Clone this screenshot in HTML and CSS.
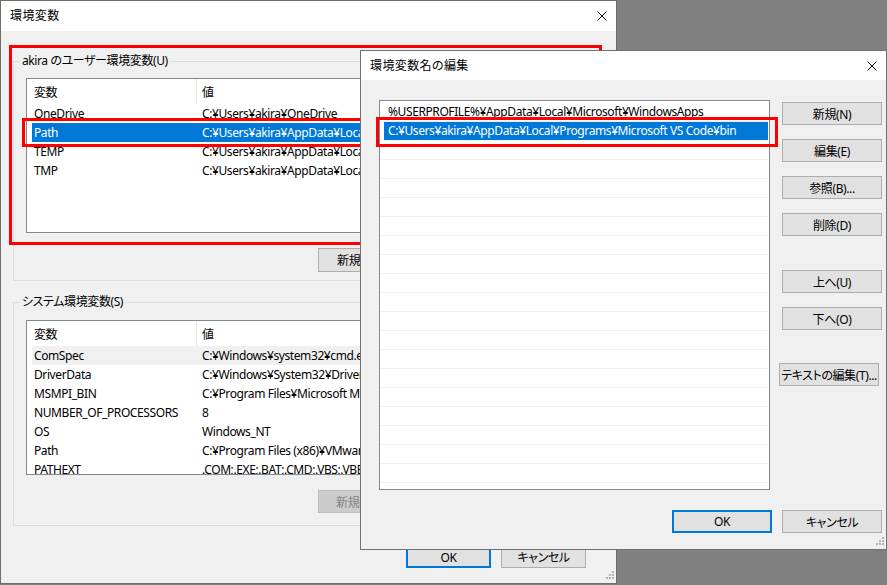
FILE: index.html
```html
<!DOCTYPE html>
<html lang="ja">
<head>
    <meta charset="UTF-8">
    <title>環境変数</title>
    <link rel="stylesheet" href="styles.css">
</head>
<body>
<div class="desktop">

    <!-- back dialog -->
    <div class="window back-window">
        <div class="titlebar">
            <span class="title">環境変数</span>
            <svg class="close" width="10" height="10" viewBox="0 0 10 10"><path d="M0.5 0.5L9.5 9.5M9.5 0.5L0.5 9.5" stroke="#000" stroke-width="1"/></svg>
        </div>
        <div class="window-body">
            <div class="group user-group">
                <div class="group-label">akira のユーザー環境変数(U)</div>
                <div class="listview">
                    <div class="lv-header"><div class="col name">変数</div><div class="col value">値</div></div>
                    <div class="lv-row"><div class="col name">OneDrive</div><div class="col value">C:¥Users¥akira¥OneDrive</div></div>
                    <div class="lv-row selected"><div class="col name">Path</div><div class="col value">C:¥Users¥akira¥AppData¥Local¥Programs¥Microsoft VS Code¥bin</div></div>
                    <div class="lv-row"><div class="col name">TEMP</div><div class="col value">C:¥Users¥akira¥AppData¥Local¥Temp</div></div>
                    <div class="lv-row"><div class="col name">TMP</div><div class="col value">C:¥Users¥akira¥AppData¥Local¥Temp</div></div>
                </div>
                <div class="group-buttons">
                    <button class="btn">新規(N)...</button>
                    <button class="btn">編集(E)...</button>
                    <button class="btn">削除(D)</button>
                </div>
            </div>

            <div class="group system-group">
                <div class="group-label">システム環境変数(S)</div>
                <div class="listview">
                    <div class="lv-header"><div class="col name">変数</div><div class="col value">値</div></div>
                    <div class="lv-row inactive"><div class="col name">ComSpec</div><div class="col value">C:¥Windows¥system32¥cmd.exe</div></div>
                    <div class="lv-row"><div class="col name">DriverData</div><div class="col value">C:¥Windows¥System32¥Drivers¥DriverData</div></div>
                    <div class="lv-row"><div class="col name">MSMPI_BIN</div><div class="col value">C:¥Program Files¥Microsoft MPI¥Bin¥</div></div>
                    <div class="lv-row"><div class="col name">NUMBER_OF_PROCESSORS</div><div class="col value">8</div></div>
                    <div class="lv-row"><div class="col name">OS</div><div class="col value">Windows_NT</div></div>
                    <div class="lv-row"><div class="col name">Path</div><div class="col value">C:¥Program Files (x86)¥VMware¥VMware Workstation¥bin¥</div></div>
                    <div class="lv-row"><div class="col name">PATHEXT</div><div class="col value">.COM;.EXE;.BAT;.CMD;.VBS;.VBE;.JS;.JSE;.WSF;.WSH;.MSC</div></div>
                </div>
                <div class="group-buttons">
                    <button class="btn" disabled>新規(W)...</button>
                    <button class="btn" disabled>編集(I)...</button>
                    <button class="btn" disabled>削除(L)</button>
                </div>
            </div>

            <div class="dialog-buttons">
                <button class="btn default">OK</button>
                <button class="btn">キャンセル</button>
            </div>
        </div>
        <svg class="grip" width="10" height="10" viewBox="0 0 10 10"><path d="M8 0h2v2H8zM5 3h2v2H5zM8 3h2v2H8zM2 6h2v2H2zM5 6h2v2H5zM8 6h2v2H8z" fill="#b4b4b4"/></svg>
    </div>

    <div class="mark mark-user"></div>
    <div class="mark mark-path"></div>

    <!-- front dialog -->
    <div class="window front-window">
        <div class="titlebar">
            <span class="title">環境変数名の編集</span>
            <svg class="close" width="10" height="10" viewBox="0 0 10 10"><path d="M0.5 0.5L9.5 9.5M9.5 0.5L0.5 9.5" stroke="#000" stroke-width="1"/></svg>
        </div>
        <div class="window-body">
            <div class="edit-area">
                <div class="entry-list">
                    <div class="entry"><span>%USERPROFILE%¥AppData¥Local¥Microsoft¥WindowsApps</span></div>
                    <div class="entry selected"><span>C:¥Users¥akira¥AppData¥Local¥Programs¥Microsoft VS Code¥bin</span></div>
                    <div class="entry"></div>
                    <div class="entry"></div>
                    <div class="entry"></div>
                    <div class="entry"></div>
                    <div class="entry"></div>
                    <div class="entry"></div>
                    <div class="entry"></div>
                    <div class="entry"></div>
                    <div class="entry"></div>
                    <div class="entry"></div>
                    <div class="entry"></div>
                    <div class="entry"></div>
                    <div class="entry"></div>
                    <div class="entry"></div>
                    <div class="entry"></div>
                    <div class="entry"></div>
                    <div class="entry"></div>
                    <div class="entry"></div>
                </div>
                <div class="side-buttons">
                    <button class="btn">新規(N)</button>
                    <button class="btn">編集(E)</button>
                    <button class="btn">参照(B)...</button>
                    <button class="btn">削除(D)</button>
                    <button class="btn move-up">上へ(U)</button>
                    <button class="btn">下へ(O)</button>
                    <button class="btn text-edit">テキストの編集(T)...</button>
                </div>
            </div>
            <div class="dialog-buttons">
                <button class="btn default">OK</button>
                <button class="btn">キャンセル</button>
            </div>
        </div>
        <svg class="grip" width="10" height="10" viewBox="0 0 10 10"><path d="M8 0h2v2H8zM5 3h2v2H5zM8 3h2v2H8zM2 6h2v2H2zM5 6h2v2H5zM8 6h2v2H8z" fill="#b4b4b4"/></svg>
    </div>

    <div class="mark mark-entry"></div>
</div>
</body>
</html>
```

FILE: styles.css
```css
:root {
    --dialog-bg: #f0f0f0;
    --select-blue: #0078d7;
    --button-bg: #e1e1e1;
    --button-border: #adadad;
    --mark-red: #ff0000;
}

body {
    margin: 0;
    font-family: "Noto Sans", "Noto Sans CJK JP", sans-serif;
    font-size: 12px;
    letter-spacing: -0.4px;
    font-feature-settings: "palt";
    color: #000;
}

.desktop {
    position: relative;
    width: 887px;
    height: 585px;
    background-color: #808080;
    overflow: hidden;
}

/* windows */
.window {
    position: absolute;
    box-sizing: border-box;
    display: flex;
    flex-direction: column;
    background-color: var(--dialog-bg);
    overflow: hidden;
}

.back-window {
    left: 0;
    top: 0;
    width: 617px;
    height: 584px;
    border: 1px solid #6e6e6e;
}

.front-window {
    left: 360px;
    top: 50px;
    width: 527px;
    height: 500px;
    border: 1px solid #707070;
}

.titlebar {
    display: flex;
    align-items: center;
    justify-content: space-between;
    background-color: #fff;
    padding: 0 9px;
    flex-shrink: 0;
}

.back-window .titlebar {
    height: 30px;
}

.front-window .titlebar {
    height: 29px;
    padding-left: 9px;
}

.title {
    line-height: 16px;
    letter-spacing: 0.4px;
}

.window-body {
    flex: 1;
    display: flex;
    flex-direction: column;
}

.back-window .window-body {
    padding: 0 13px 0 12px;
}

.front-window .window-body {
    padding: 20px 4px 0 18px;
}

/* buttons */
.btn {
    box-sizing: border-box;
    height: 23px;
    padding: 0;
    font-family: inherit;
    font-size: 12px;
    letter-spacing: inherit;
    font-feature-settings: inherit;
    color: #000;
    background-color: var(--button-bg);
    border: 1px solid var(--button-border);
    border-radius: 0;
    white-space: nowrap;
}

.btn:disabled {
    background-color: #cccccc;
    border-color: #bfbfbf;
    color: #838383;
}

.btn.default {
    border: 2px solid var(--select-blue);
}

/* group boxes */
.group {
    display: flex;
    flex-direction: column;
    border: 1px solid #dcdcdc;
    padding: 0 11px 8px 12px;
}

.user-group {
    margin-top: 30px;
}

.system-group {
    margin-top: 21px;
    padding-bottom: 12px;
}

.group-label {
    align-self: flex-start;
    margin: -9px 0 0 -6px;
    padding: 0 2px;
    height: 16px;
    line-height: 16px;
    background-color: var(--dialog-bg);
}

.group-buttons {
    display: flex;
    justify-content: flex-end;
    gap: 9px;
    margin-top: 15px;
}

.group-buttons .btn {
    width: 85px;
    height: 24px;
}

.system-group .group-buttons .btn {
    height: 23px;
}

/* list views */
.listview {
    box-sizing: border-box;
    height: 155px;
    margin-top: 9px;
    background-color: #fff;
    border: 1px solid #828790;
    overflow: hidden;
}

.system-group .listview {
    margin-top: 10px;
}

.lv-header,
.lv-row {
    display: flex;
    margin-left: 5px;
    white-space: nowrap;
}

.lv-header {
    height: 25px;
    align-items: center;
}

.lv-row {
    height: 19px;
    align-items: center;
}

.col.name {
    box-sizing: border-box;
    width: 165px;
    padding-left: 2px;
    border-right: 1px solid transparent;
    align-self: stretch;
    display: flex;
    align-items: center;
}

.lv-header .col.name {
    border-right-color: #e5e5e5;
}

.col.value {
    padding-left: 5px;
}

.lv-row.selected {
    background-color: var(--select-blue);
    color: #fff;
}

.lv-row.inactive {
    background-color: #f0f0f0;
}

.dialog-buttons {
    display: flex;
    justify-content: flex-end;
    gap: 10px;
}

.back-window .dialog-buttons {
    margin-top: 20px;
    padding-right: 17px;
}

.back-window .dialog-buttons .btn {
    width: 85px;
    height: 22px;
}

.front-window .dialog-buttons {
    margin-top: 20px;
}

.front-window .dialog-buttons .btn {
    width: 100px;
}

/* edit dialog */
.edit-area {
    display: flex;
    gap: 12px;
}

.entry-list {
    box-sizing: border-box;
    width: 391px;
    height: 390px;
    padding: 2px 1px 0 1px;
    background-color: #fff;
    border: 1px solid #828790;
    overflow: hidden;
}

.entry {
    box-sizing: border-box;
    height: 19px;
    padding-left: 3px;
    border-bottom: 1px solid #efefef;
    white-space: nowrap;
}

.entry span {
    display: block;
    height: 18px;
    line-height: 18px;
    padding-left: 4px;
}

.entry.selected span {
    background-color: var(--select-blue);
    color: #fff;
}

.side-buttons {
    display: flex;
    flex-direction: column;
    gap: 14px;
    padding-top: 2px;
}

.side-buttons .btn {
    width: 100px;
}

.side-buttons .move-up {
    margin-top: 20px;
}

.side-buttons .text-edit {
    margin-top: 19px;
    margin-left: -3px;
}

.grip {
    position: absolute;
    right: 2px;
    bottom: 2px;
}

/* red annotation boxes */
.mark {
    position: absolute;
    box-sizing: border-box;
    border: 3px solid var(--mark-red);
}

.mark-user {
    left: 9px;
    top: 45px;
    width: 593px;
    height: 200px;
}

.mark-path {
    left: 22px;
    top: 118px;
    width: 360px;
    height: 29px;
}

.mark-entry {
    left: 376px;
    top: 117px;
    width: 402px;
    height: 30px;
}
```
